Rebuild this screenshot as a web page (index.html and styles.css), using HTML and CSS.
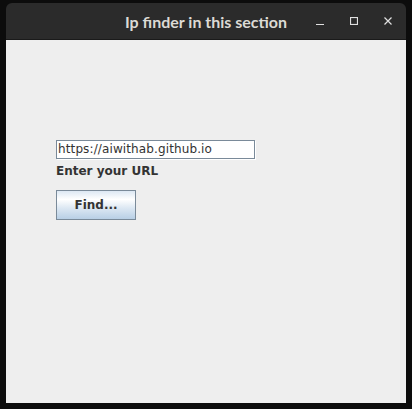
FILE: index.html
```html
<!DOCTYPE html>
<html>
<head>
<meta charset="utf-8">
<link rel="stylesheet" href="styles.css">
</head>
<body>
<div class="window">
  <div class="titlebar">
    <div class="spacer"></div>
    <div class="title">Ip finder in this section</div>
    <div class="controls">
      <span class="ctl"><svg width="8" height="8" viewBox="0 0 8 8"><path d="M0 7.5H8" stroke="#e0e0e0" stroke-width="1.2"/></svg></span>
      <span class="ctl"><svg width="8" height="8" viewBox="0 0 8 8"><rect x="0.5" y="0.5" width="7" height="7" fill="none" stroke="#e0e0e0" stroke-width="1.2"/></svg></span>
      <span class="ctl"><svg width="8" height="8" viewBox="0 0 8 8"><path d="M0.5 0.5L7.5 7.5M7.5 0.5L0.5 7.5" stroke="#e0e0e0" stroke-width="1.2"/></svg></span>
    </div>
  </div>
  <div class="content">
    <div class="field">https://aiwithab.github.io</div>
    <div class="label">Enter your URL</div>
    <div class="button">Find...</div>
  </div>
</div>
</body>
</html>
```
FILE: styles.css
```css
html, body {
  margin: 0;
  padding: 0;
  background: #0c0c0c;
}
body {
  width: 412px;
  height: 409px;
  overflow: hidden;
}
.window {
  margin: 3px 0 0 6px;
  width: 400px;
  height: 400px;
  display: flex;
  flex-direction: column;
  border-radius: 6px 6px 0 0;
  overflow: hidden;
}
.titlebar {
  height: 36px;
  flex: none;
  background: #2b2b2b;
  border-bottom: 1px solid #1a1a1a;
  display: grid;
  grid-template-columns: 1fr auto 1fr;
  align-items: center;
}
.title {
  font-family: "Lato", "DejaVu Sans", sans-serif;
  font-weight: bold;
  font-size: 16px;
  color: #dcdad5;
  white-space: nowrap;
}
.controls {
  display: flex;
  justify-content: flex-end;
  padding-right: 1px;
}
.ctl {
  width: 34px;
  height: 8px;
  display: flex;
  justify-content: center;
}
.ctl svg {
  display: block;
}
.content {
  flex: 1;
  background: #eeeeee;
  padding: 100px 0 0 50px;
  display: flex;
  flex-direction: column;
  align-items: flex-start;
  font-family: "DejaVu Sans", sans-serif;
  font-size: 12px;
}
.field {
  box-sizing: border-box;
  width: 199px;
  height: 19px;
  border: 1px solid #7a8a99;
  box-shadow: 1px 1px 0 #ffffff;
  background: #ffffff;
  color: #333333;
  padding-left: 1px;
  line-height: 17px;
  letter-spacing: 0.12px;
  white-space: nowrap;
  overflow: hidden;
}
.label {
  margin-top: 5px;
  line-height: 14px;
  font-weight: bold;
  color: #333333;
}
.button {
  margin-top: 12px;
  box-sizing: border-box;
  width: 80px;
  height: 30px;
  border: 1px solid #7a8a99;
  background: linear-gradient(to bottom, #dde8f3 0%, #ffffff 30%, #dde8f3 60%, #b8cfe5 100%);
  display: flex;
  align-items: center;
  justify-content: center;
  font-weight: bold;
  color: #333333;
}
```
